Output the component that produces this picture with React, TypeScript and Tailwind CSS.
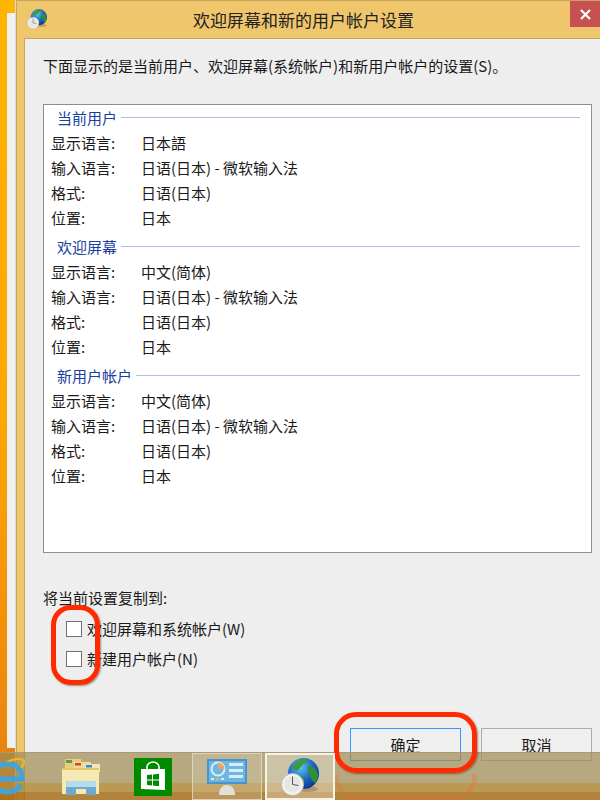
import React from "react";

function GlobeClock({ size, id }: { size: number; id: string }) {
  return (
    <svg width={size} height={size} viewBox="0 0 38 38">
      <defs>
        <radialGradient id={id} cx="0.4" cy="0.3" r="0.75">
          <stop offset="0" stopColor="#5fc4ee" />
          <stop offset="0.55" stopColor="#1c66c0" />
          <stop offset="1" stopColor="#0f2f8f" />
        </radialGradient>
      </defs>
      <ellipse cx="26" cy="31" rx="11" ry="3" fill="#6b5a35" opacity="0.35" />
      <circle cx="22.500" cy="15.500" r="15.500" fill={`url(#${id})`} />
      <path d="M11 9c3-5 8-8 14-8 3 2 0 4-3 5-1 3-3 3-4 5-2 3-5 2-7-2z" fill="#3f9a3a" />
      <path d="M28 8c3-1 7 3 9 8 0 4-1 7-3 9-3-2-4-4-5-7-2-3-3-7-1-10z" fill="#2f8f38" />
      <path d="M18 18c3 0 5 2 5 4 0 3-2 6-4 7-2-3-3-7-1-11z" fill="#3f9a3a" />
      <circle cx="11.500" cy="26.500" r="11" fill="#f4f4f2" stroke="#b9b9b5" strokeWidth="1" />
      <circle cx="11.500" cy="26.500" r="8.500" fill="#e6e6e4" />
      <path d="M11.500 18.500v8l6 1" fill="none" stroke="#555" strokeWidth="1" />
    </svg>
  );
}

function Folder() {
  return (
    <svg width="40" height="38" viewBox="0 0 40 38">
      <rect x="4" y="1" width="16" height="12" fill="#e9cf7d" />
      <rect x="5" y="2" width="6" height="3" fill="#4f9f50" />
      <rect x="13" y="4" width="17" height="10" fill="#f0dc9a" />
      <rect x="14" y="5" width="6" height="2.500" fill="#d8402f" />
      <rect x="24" y="6" width="15" height="8" fill="#f3e6b8" />
      <rect x="25" y="7" width="6" height="2.500" fill="#3d86d1" />
      <path d="M1 10h37v26H1z" fill="#f5e9b4" />
      <path d="M1 10h37v2H1z" fill="#e7c665" />
      <path d="M5 25c0-1 1-2 3-2h24c2 0 3 1 3 2v12H25v-6H15v6H5z" fill="#6fa9d0" />
      <path d="M5 25c0-1 1-2 3-2h24c2 0 3 1 3 2v4H5z" fill="#b3dcef" />
    </svg>
  );
}

function Store() {
  return (
    <div className="flex h-[38px] w-[38px] items-center justify-center bg-[#008a00]">
      <svg width="30" height="32" viewBox="0 0 30 32">
        <path d="M9 9V6c0-3 3-5 6-5s6 2 6 5v3" fill="none" stroke="#fff" strokeWidth="1.600" />
        <path d="M3 8h24v21l-24-1z" fill="#fff" />
        <path d="M9 14l5-.5v5H9zM15 13.400l6-.6v5.700h-6zM9 19.500h5v5l-5-.5zM15 19.500h6v5.700l-6-.6z" fill="#008a00" />
      </svg>
    </div>
  );
}

function ControlPanel() {
  return (
    <svg width="42" height="38" viewBox="0 0 42 38">
      <rect x="1" y="1" width="40" height="25" fill="#4a93cf" />
      <rect x="3" y="3" width="36" height="21" fill="#6fb7e3" />
      <circle cx="12" cy="11" r="6.500" fill="none" stroke="#d6eefa" strokeWidth="2" />
      <path d="M12 4.500a6.500 6.500 0 0 1 6.500 6.500H12z" fill="#f0a35e" />
      <rect x="5" y="20" width="3" height="2" fill="#d6eefa" />
      <rect x="10" y="20" width="3" height="2" fill="#e6b65f" />
      <rect x="15" y="20" width="3" height="2" fill="#d6eefa" />
      <rect x="23" y="5" width="14" height="3" fill="#d6eefa" />
      <rect x="23" y="11" width="14" height="3" fill="#d6eefa" />
      <rect x="23" y="17" width="14" height="3" fill="#d6eefa" />
      <path d="M13 37c0-6 3-10 8-10s8 4 8 10z" fill="#e2e0da" />
    </svg>
  );
}

function IE() {
  return (
    <svg width="26" height="38" viewBox="0 0 26 38">
      <path d="M-6 12C6 2 20-1 23 2c2 2 0 6-2 8" fill="none" stroke="#e7b52c" strokeWidth="2.500" />
      <path d="M-8 21H22C22 10 15 6 7 6C-3 6-8 14-8 21C-8 30-1 34 7 34C13 34 18 32 21 27" fill="none" stroke="#3ea4e0" strokeWidth="5" />
    </svg>
  );
}

function Row({ label, value }: { label: string; value: string }) {
  return (
    <div className="flex h-[25px] items-center">
      <div className="w-[90px] shrink-0">{label}</div>
      <div>{value}</div>
    </div>
  );
}

function Group({ title, lang }: { title: string; lang: string }) {
  return (
    <div className="mb-[4px]">
      <div className="flex h-[25px] items-center gap-[4px] pl-[13px] pr-[11px]">
        <span className="text-[#1a3f9c]">{title}</span>
        <div className="h-px flex-1 bg-[#b0bfde]" />
      </div>
      <div className="pl-[7px]">
        <Row label="显示语言:" value={lang} />
        <Row label="输入语言:" value="日语(日本) - 微软输入法" />
        <Row label="格式:" value="日语(日本)" />
        <Row label="位置:" value="日本" />
      </div>
    </div>
  );
}

function Check({ label }: { label: string }) {
  return (
    <div className="flex h-[30px] items-center pl-[23px]">
      <div className="h-[16px] w-[16px] border border-[#707070] bg-white" />
      <span className="ml-[5px]">{label}</span>
    </div>
  );
}

export default function App() {
  return (
    <div
      className="relative flex h-[800px] w-[600px] overflow-hidden bg-[#f0f0f0] text-[15px] leading-[20px] text-[#1a1a1a]"
      style={{ fontFamily: '"Noto Sans CJK SC", "Liberation Sans", sans-serif' }}
    >
      <div className="w-[7px] shrink-0 bg-gradient-to-b from-[#ffb400] via-[#fda800] to-[#e87f10]" />
      <div className="flex w-[9px] shrink-0 flex-col border-r border-[#dcdcdc]">
        <div className="h-[13px] bg-[#ffb400]" />
        <div className="flex-1" />
        <div className="h-[52px] bg-[#e87f10]" />
      </div>
      <div className="flex min-w-0 flex-1 flex-col border-l border-t border-[#c9a55c] bg-[#efc66b]">
        <div className="relative flex h-[37px] shrink-0 items-center justify-center text-[17px] text-[#222]">
          <div className="absolute left-[10px] top-[8px]">
            <GlobeClock size={20} id="globeSmall" />
          </div>
          <span className="mr-[10px]">欢迎屏幕和新的用户帐户设置</span>
          <div className="absolute right-0 top-0 flex h-[26px] w-[30px] items-center justify-center bg-[#c75050]">
            <svg width="11" height="11" viewBox="0 0 11 11">
              <path d="M1 1l9 9M10 1l-9 9" stroke="#fff" strokeWidth="2.200" />
            </svg>
          </div>
        </div>
        <div className="ml-[7px] flex flex-1 flex-col border-l border-t border-[#c9a55c] bg-[#eeeeee] pl-[18px] pr-[8px] pt-[17px]">
          <div className="h-[48px]">下面显示的是当前用户、欢迎屏幕(系统帐户)和新用户帐户的设置(S)。</div>
          <div className="h-[449px] border border-[#8e8e8e] bg-white">
            <Group title="当前用户" lang="日本語" />
            <Group title="欢迎屏幕" lang="中文(简体)" />
            <Group title="新用户帐户" lang="中文(简体)" />
          </div>
          <div className="mt-[35px] h-[20px]">将当前设置复制到:</div>
          <div className="mt-[6px]">
            <Check label="欢迎屏幕和系统帐户(W)" />
            <Check label="新建用户帐户(N)" />
          </div>
          <div className="mt-[54px] flex justify-end gap-[20px]">
            <button className="h-[33px] w-[111px] border border-[#3399ff] bg-[#efefef]">确定</button>
            <button className="h-[33px] w-[111px] border border-[#acacac] bg-[#efefef]">取消</button>
          </div>
        </div>
      </div>

      <div className="absolute inset-x-0 bottom-0 h-[48px]">
        <div className="h-[31px] border-t border-[#a89a78] bg-[#a08a50]/70" />
        <div className="h-[9px] bg-[#b08a3a]/85" />
        <div className="h-[8px] bg-[#a8701c]/85" />
      </div>

      <div className="absolute left-[334px] top-[774px] h-[26px] w-[143px] rounded-b-[22px] border-x-[5px] border-b-[5px] border-[#ff5a20]/20" />
      <div className="absolute left-[51px] top-[605px] h-[80px] w-[49px] rounded-[20px] border-[5px] border-[#ff2a00] shadow-[1px_1px_2px_rgba(0,0,0,0.4)]" />
      <div className="absolute left-[334px] top-[712px] h-[61px] w-[143px] rounded-[22px] border-[5px] border-[#ff2a00] shadow-[1px_1px_2px_rgba(0,0,0,0.4)]" />

      <div className="absolute bottom-0 left-0 flex h-[47px] items-center">
        <div className="h-[38px] w-[26px]">
          <IE />
        </div>
        <div className="ml-[35px]">
          <Folder />
        </div>
        <div className="ml-[33px]">
          <Store />
        </div>
        <div className="ml-[20px] flex h-[47px] w-[70px] items-center justify-center border border-[#e6dcc6]/80 bg-white/15">
          <ControlPanel />
        </div>
        <div className="ml-[3px] flex h-[47px] w-[70px] items-center justify-center border-2 border-[#f6f2e8] bg-white/30">
          <GlobeClock size={38} id="globeLarge" />
        </div>
      </div>
    </div>
  );
}
